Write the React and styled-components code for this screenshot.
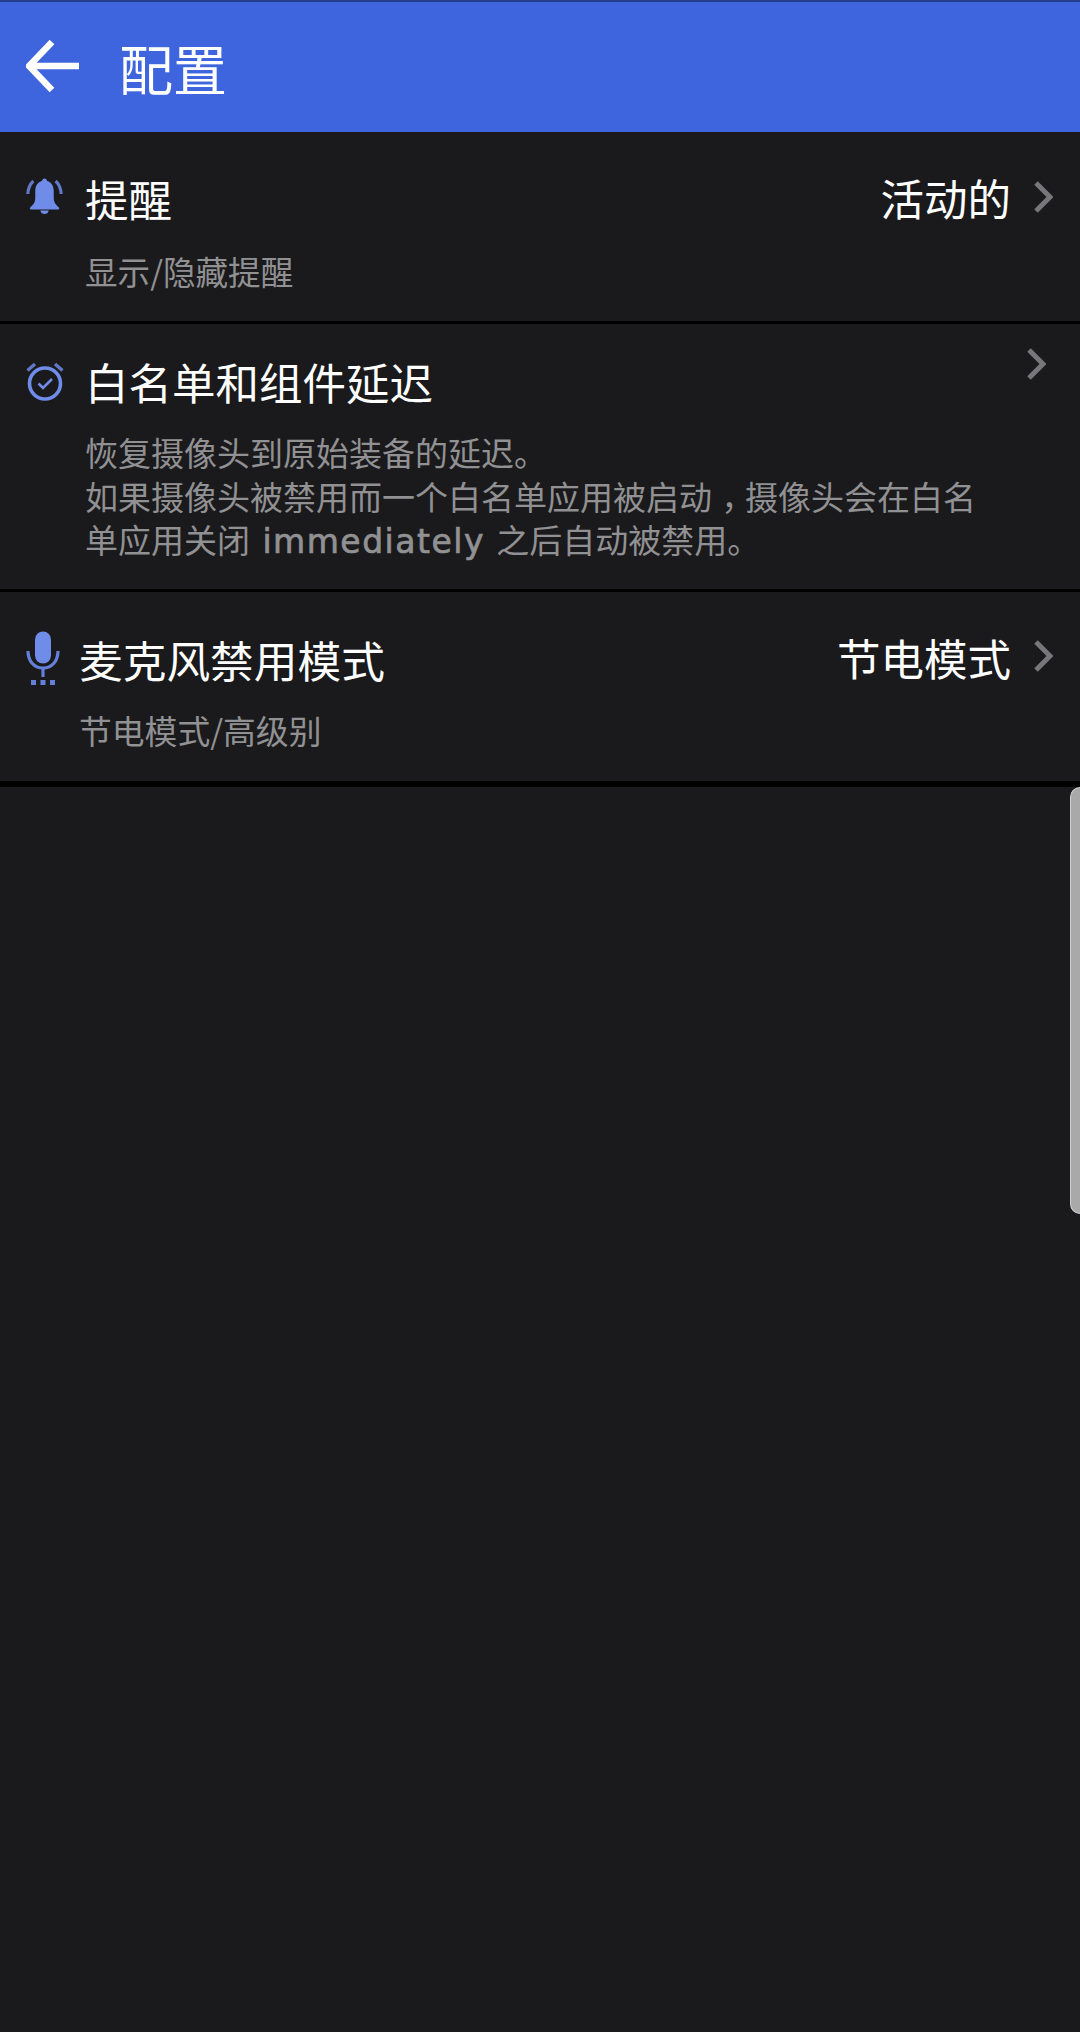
import React from 'react'
import styled, {createGlobalStyle} from 'styled-components'

const GlobalStyle = createGlobalStyle`
	html, body {
		margin: 0;
		padding: 0;
		background: #1a1a1c;
	}
	* { box-sizing: border-box; }
`

const Page = styled.div`
	position: relative;
	width: 1080px;
	height: 2032px;
	overflow: hidden;
	background: #1a1a1c;
	font-family: "Noto Sans CJK SC", "Noto Sans", sans-serif;
`

const Header = styled.div`
	display: flex;
	align-items: center;
	height: 132px;
	padding: 0 0 0 26px;
	background: #3e64de;
	border-top: 2px solid #233c8c;
`
const BackArrow = styled.svg`
	display: block;
	width: 54px;
	height: 54px;
	margin-top: -2px;
	flex-shrink: 0;
`
const Title = styled.div`
	margin-left: 39px;
	color: #fff;
	font-size: 54px;
	line-height: 60px;
	margin-top: 1px;
`

const List = styled.div`
	display: flex;
	flex-direction: column;
`
const Row = styled.div`
	display: flex;
	height: ${props => props.height}px;
	padding: ${props => props.top}px 0 0 26px;
	border-bottom: ${props => props.line}px solid #000;
`
const IconBox = styled.div`
	width: ${props => props.width}px;
	flex-shrink: 0;
	margin-top: ${props => props.offset}px;
	svg {
		display: block;
	}
`
const Body = styled.div`
	flex: 1;
	min-width: 0;
`
const TitleLine = styled.div`
	display: flex;
	align-items: center;
	height: 52px;
`
const ItemTitle = styled.div`
	flex: 1;
	color: #fff;
	font-size: ${props => props.size}px;
	line-height: 52px;
`
const Value = styled.div`
	color: #fff;
	font-size: 43.5px;
	line-height: 52px;
	margin-right: 22px;
	margin-top: -3px;
`
const Chevron = styled.svg`
	display: block;
	width: 20px;
	height: 34px;
	margin-right: ${props => props.right}px;
	margin-top: ${props => props.lift}px;
	flex-shrink: 0;
`
const Desc = styled.div`
	margin-top: ${props => props.gap}px;
	color: #919193;
	font-size: ${props => props.size}px;
	line-height: 43.5px;
	white-space: pre-line;
`
const Latin = styled.span`
	font-family: "DejaVu Sans", "Noto Sans", sans-serif;
	font-size: 33px;
	letter-spacing: 1.5px;
	margin: 0 4px 0 5px;
	-webkit-text-stroke: 0.7px #919193;
`
const Comma = styled.span`
	display: inline-block;
	width: 1em;
	text-indent: 0.28em;
`

const ScrollThumb = styled.div`
	position: absolute;
	right: 0;
	top: 787px;
	width: 10px;
	height: 427px;
	background: #a9a9a9;
	border-radius: 10px 0 0 10px;
	border: 1px solid #d0d0d0;
	border-right: 0;
`

const blue = '#6f8ce8'

const Bell = () => (
	<svg width="37" height="40" viewBox="0 0 40 40" preserveAspectRatio="none" fill="none">
		<path d="M20 1.500c1.600 0 2.600 1.100 2.800 2.400 5 1.200 7.200 5.200 7.200 10.600v7c0 3.500 1.800 6 5.500 9 .8.800.4 2-.8 2H5.300c-1.200 0-1.600-1.200-.8-2 3.700-3 5.500-5.500 5.500-9v-7c0-5.400 2.200-9.400 7.200-10.600.2-1.300 1.200-2.400 2.800-2.400z" fill={blue} />
		<path d="M15.500 33.500h9c-.5 2.400-2.300 3.500-4.500 3.500s-4-1.100-4.500-3.500z" fill={blue} />
		<path d="M8 4C4.500 7 2.300 11 2 17M32 4c3.500 3 5.700 7 6 13" stroke="#5f78c8" strokeWidth="3.400" />
	</svg>
)

const Alarm = () => (
	<svg width="38" height="40" viewBox="0 0 38 40" fill="none">
		<circle cx="19" cy="22.500" r="15.500" stroke={blue} strokeWidth="3.600" />
		<path d="M12.500 22.500l4.500 4.500 9-9" stroke={blue} strokeWidth="2.600" />
		<path d="M1.500 9.500L9 3M36.500 9.500L29 3" stroke="#5f78c8" strokeWidth="3.400" />
	</svg>
)

const Mic = () => (
	<svg width="34" height="56" viewBox="0 0 34 56" fill="none">
		<rect x="9" y="0.500" width="16" height="32" rx="8" fill={blue} />
		<path d="M2 20c0 10 6 17 15 17s15-7 15-17" stroke="#6580d8" strokeWidth="3.200" />
		<path d="M17 37v9" stroke="#6580d8" strokeWidth="3.200" />
		<path d="M5 49h5v5H5zM14.500 49h5v5h-5zM24 49h5v5h-5z" fill="#6580d8" />
	</svg>
)

const items = [
	{
		height: 192, top: 41, line: 3, icon: <Bell />, iconWidth: 59, iconOffset: 4,
		title: '提醒', titleSize: 43.500, value: '活动的', gap: 24, descSize: 32.600, chevronRight: 27, chevronLift: -4,
		desc: '显示/隐藏提醒',
	},
	{
		height: 268, top: 32, line: 3, icon: <Alarm />, iconWidth: 59, iconOffset: 5,
		title: '白名单和组件延迟', titleSize: 43.500, gap: 23, descSize: 33, chevronRight: 34, chevronLift: -37,
		desc: (
			<>
				{'恢复摄像头到原始装备的延迟。\n如果摄像头被禁用而一个白名单应用被启动'}
				<Comma>，</Comma>
				{'摄像头会在白名\n单应用关闭 '}
				<Latin>immediately</Latin>
				{' 之后自动被禁用。'}
			</>
		),
	},
	{
		height: 195, top: 41, line: 6, icon: <Mic />, iconWidth: 53, iconOffset: -2,
		title: '麦克风禁用模式', titleSize: 43.700, value: '节电模式', gap: 23, descSize: 32.800, chevronRight: 27, chevronLift: -6,
		desc: '节电模式/高级别',
	},
]

const ItemRow = ({item}) => (
	<Row height={item.height} top={item.top} line={item.line}>
		<IconBox width={item.iconWidth} offset={item.iconOffset}>{item.icon}</IconBox>
		<Body>
			<TitleLine>
				<ItemTitle size={item.titleSize}>{item.title}</ItemTitle>
				{item.value && <Value>{item.value}</Value>}
				<Chevron viewBox="0 0 20 34" right={item.chevronRight} lift={item.chevronLift} fill="none">
					<path d="M3 3l14 14L3 31" stroke="#77777a" strokeWidth="5" />
				</Chevron>
			</TitleLine>
			<Desc gap={item.gap} size={item.descSize}>{item.desc}</Desc>
		</Body>
	</Row>
)

export default function App() {
	return (
		<Page>
			<GlobalStyle />
			<Header>
				<BackArrow viewBox="0 0 54 54" fill="none">
					<path d="M53 27H4M26 3L3 27l23 24" stroke="#fff" strokeWidth="6.500" />
				</BackArrow>
				<Title>配置</Title>
			</Header>
			<List>
				{items.map(item => <ItemRow key={item.title} item={item} />)}
			</List>
			<ScrollThumb />
		</Page>
	)
}
